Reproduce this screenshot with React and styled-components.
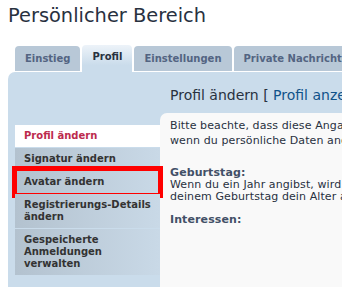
import React from 'react';
import styled, { createGlobalStyle } from 'styled-components';

const GlobalStyle = createGlobalStyle`
  html, body {
    margin: 0;
    padding: 0;
    background: #fff;
    overflow: hidden;
  }
  body {
    font-family: "DejaVu Sans", Verdana, sans-serif;
    color: #28313f;
  }
`;

const tabs = ['Einstieg', 'Profil', 'Einstellungen', 'Private Nachrichten', 'Benutzergruppen'];

const menu = [
  { label: 'Profil ändern', active: true },
  { label: 'Signatur ändern' },
  { label: 'Avatar ändern', marked: true },
  { label: 'Registrierungs-Details ändern' },
  { label: 'Gespeicherte Anmeldungen verwalten' },
];

function App() {
  return (
    <Page>
      <GlobalStyle />
      <Title>Persönlicher Bereich</Title>
      <TabRow>
        {tabs.map((t) => (
          <Tab key={t} active={t === 'Profil'}>{t}</Tab>
        ))}
      </TabRow>
      <Panel>
        <Sidebar>
          <Menu>
            {menu.map((m) => (
              <MenuItem key={m.label} active={m.active} marked={m.marked}>
                {m.label}
              </MenuItem>
            ))}
          </Menu>
        </Sidebar>
        <Main>
          <Heading>
            Profil ändern [ <HeadLink href="#">Profil anzeigen</HeadLink> ]
          </Heading>
          <ContentBox>
            <Intro>
              Bitte beachte, dass diese Angaben öffentlich angezeigt werden. Sei vorsichtig,<br />
              wenn du persönliche Daten angibst. Alle mit * markierten Felder müssen ausgefüllt werden.
            </Intro>
            <Field>
              <Label>Geburtstag:</Label>
              <Explain>
                Wenn du ein Jahr angibst, wird neben<br />
                deinem Geburtstag dein Alter angezeigt.
              </Explain>
            </Field>
            <Field>
              <Label>Interessen:</Label>
            </Field>
          </ContentBox>
        </Main>
      </Panel>
    </Page>
  );
}

export default App;

const Page = styled.div`
  width: 620px;
  padding-left: 8px;
`;

const Title = styled.h2`
  margin: 4px 0 0;
  font-size: 19.4px;
  line-height: 23px;
  font-weight: normal;
  color: #28313f;
  white-space: nowrap;
`;

const TabRow = styled.div`
  display: flex;
  align-items: flex-end;
  gap: 2px;
  margin: 18px 0 0 7px;
`;

const Tab = styled.div`
  height: ${(p) => (p.active ? '27px' : '25px')};
  margin-bottom: ${(p) => (p.active ? '0' : '1px')};
  padding: 0 10px ${(p) => (p.active ? '4px' : '0')};
  box-sizing: border-box;
  display: flex;
  align-items: center;
  border-radius: 4px 4px 0 0;
  background: ${(p) => (p.active ? 'linear-gradient(#edf3f9, #cadceb 75%)' : '#b8c8d7')};
  color: ${(p) => (p.active ? '#28313f' : '#536482')};
  font-size: 10px;
  font-weight: bold;
  white-space: nowrap;
`;

const Panel = styled.div`
  display: flex;
  min-height: 230px;
  background: #cadceb;
  border-radius: 7px 0 0 0;
`;

const Sidebar = styled.div`
  width: 152px;
  flex-shrink: 0;
  box-sizing: border-box;
  padding: 53px 0 0 7px;
`;

const Menu = styled.ul`
  list-style: none;
  margin: 0;
  padding: 0;
  display: flex;
  flex-direction: column;
  gap: 1px;
`;

const MenuItem = styled.li`
  position: relative;
  padding: 5px 5px 5px 9px;
  font-size: 10px;
  font-weight: bold;
  line-height: 12px;
  color: ${(p) => (p.active ? '#bc2a4d' : '#333')};
  background: ${(p) => (p.active ? '#fff' : 'linear-gradient(to right, #b3c2cf, #c9d9e7)')};

  ${(p) =>
    p.marked &&
    `
    &::after {
      content: '';
      position: absolute;
      top: -5px;
      bottom: -5px;
      left: -3px;
      right: -3px;
      border: 5px solid #ff0000;
    }
  `}
`;

const Main = styled.div`
  flex: 1;
  display: flex;
  flex-direction: column;
`;

const Heading = styled.h3`
  margin: 0;
  padding: 14px 0 9px 10px;
  font-size: 14px;
  line-height: 18px;
  font-weight: normal;
  color: #28313f;
  white-space: nowrap;
`;

const HeadLink = styled.a`
  color: #105289;
  text-decoration: none;
`;

const ContentBox = styled.div`
  flex: 1;
  background: #f9f9f9;
  border-radius: 7px 0 0 0;
  padding: 5px 10px;
  font-size: 11px;
  letter-spacing: 0.1px;
  color: #28313f;
`;

const Intro = styled.p`
  margin: 0 0 19px;
  line-height: 15px;
  white-space: nowrap;
`;

const Field = styled.div`
  margin-bottom: 11px;
  line-height: 12px;
  white-space: nowrap;
`;

const Label = styled.div`
  font-weight: bold;
  color: #425067;
`;

const Explain = styled.div`
  color: #28313f;
`;
